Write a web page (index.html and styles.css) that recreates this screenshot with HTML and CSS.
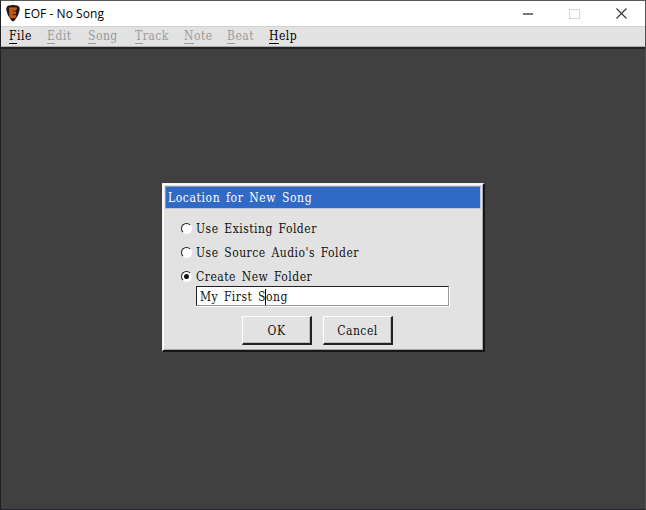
FILE: index.html
```html
<!DOCTYPE html>
<html lang="en">
<head>
<meta charset="utf-8">
<title>EOF - No Song</title>
<link rel="stylesheet" href="styles.css">
</head>
<body>
<div class="window">
  <header class="titlebar">
    <svg class="logo" width="14" height="17" viewBox="0 0 14 17">
      <path d="M2 .8Q7-.6 12 .8Q14 1.6 13.7 5Q13 10 9 15Q7 17.5 5 15Q1 10 .3 5Q0 1.6 2 .8Z" fill="#201714"/>
      <path d="M3.5 2.8H10.5L10 5.2H6.3V6.8H9.5V8.8H6.1V10.4H9.8L9.2 12.7H4.4L3.8 11Z" fill="#c9530f" stroke="#ee7627" stroke-width=".5"/>
    </svg>
    <h1 class="app-name">EOF - No Song</h1>
    <div class="controls">
      <svg width="10" height="10"><path d="M0 5H10" stroke="#777" stroke-width="2"/></svg>
      <svg width="11" height="10"><rect x=".5" y=".5" width="10" height="9" fill="none" stroke="#d4d4d4"/></svg>
      <svg width="11" height="11"><path d="M.5 .5L10.5 10.5M10.5 .5L.5 10.5" stroke="#333" stroke-width="1.1"/></svg>
    </div>
  </header>
  <nav class="menubar">
    <span class="menu active file"><u>F</u>ile</span>
    <span class="menu edit"><u>E</u>dit</span>
    <span class="menu song"><u>S</u>ong</span>
    <span class="menu track"><u>T</u>rack</span>
    <span class="menu note"><u>N</u>ote</span>
    <span class="menu beat"><u>B</u>eat</span>
    <span class="menu active help"><u>H</u>elp</span>
  </nav>
  <main class="workspace">
    <section class="dialog">
      <h2 class="dialog-title">Location for New Song</h2>
      <div class="options">
        <div class="option"><i class="radio"></i><span>Use Existing Folder</span></div>
        <div class="option"><i class="radio"></i><span>Use Source Audio's Folder</span></div>
        <div class="option"><i class="radio checked"></i><span>Create New Folder</span></div>
      </div>
      <div class="field">My First S<i class="caret"></i>ong</div>
      <div class="buttons">
        <div class="button ok">OK</div>
        <div class="button">Cancel</div>
      </div>
    </section>
  </main>
</div>
</body>
</html>
```
FILE: styles.css
```css
* { box-sizing: border-box; }
body { margin: 0; }
h1, h2 { margin: 0; font-weight: 400; }

.window {
  width: 646px;
  height: 510px;
  display: flex;
  flex-direction: column;
  background: #404040;
  border: 1px solid #202027;
  border-top-color: #5a5a5a;
  border-right-color: #505050;
  font: 12px/16px "DejaVu Serif Condensed", "DejaVu Serif", serif;
  font-stretch: condensed;
  letter-spacing: 0.5px;
  word-spacing: 1.8px;
  color: #111;
  overflow: hidden;
}

.titlebar {
  height: 25px;
  flex: none;
  display: flex;
  align-items: center;
  padding: 0 18px 0 5px;
  background: #fff;
}
.app-name {
  margin: 1px 0 0 4px;
  font: 12px/16px "Open Sans", sans-serif;
  letter-spacing: 0.05px;
  word-spacing: 0;
  color: #000;
}
.controls { display: flex; align-items: center; gap: 36px; margin-left: auto; }

.menubar {
  height: 23px;
  flex: none;
  display: flex;
  padding: 1px 0 0 8px;
  background: #e2e2e2;
  border-top: 1px solid #d2d2d2;
  border-bottom: 2px solid #222;
  box-shadow: inset 0 -1px #b0b0b0;
  color: #9a9a9a;
}
.menu { flex: none; white-space: nowrap; }
.active { color: #000; }
.menu u { text-decoration: none; display: inline-block; height: 16px; border-bottom: 1px solid currentColor; }
.file { width: 38px; }
.edit { width: 41px; }
.song { width: 47px; }
.track { width: 49px; }
.note { width: 43px; }
.beat { width: 42px; }

.workspace { flex: 1; padding: 134px 0 0 161px; }
.dialog {
  width: 323px;
  height: 169px;
  padding: 2px;
  background: #e2e2e2;
  border: 1px solid #f4f4f4;
  border-right: 2px solid #161616;
  border-bottom: 2px solid #161616;
  box-shadow: inset 1px 1px #fff, inset -1px -1px #a8a8a8;
}
.dialog-title {
  height: 23px;
  padding: 3px 0 0 2px;
  border: 1px solid #8f9bb4;
  border-right-color: #c0cadb;
  border-bottom-color: #c0cadb;
  background: #3169c6;
  font: inherit;
  letter-spacing: 0.6px;
  color: #fff;
}
.options { padding: 8px 0 0 16px; }
.option { height: 24px; display: flex; align-items: center; gap: 4px; }
.radio {
  width: 11px;
  height: 11px;
  margin-top: -2px;
  display: grid;
  place-items: center;
  border: 1px solid #222;
  border-right-color: #fff;
  border-bottom-color: #fff;
  border-radius: 50%;
  background: #fff;
}
.checked::after { content: ""; width: 5px; height: 5px; border-radius: 50%; background: #111; }
.field {
  width: 253px;
  height: 20px;
  margin: -3px 0 0 31px;
  padding: 2px 0 0 3px;
  background: #fff;
  border: 1px solid #222;
  border-right-color: #999;
  border-bottom-color: #999;
  box-shadow: 1px 1px #fff;
  white-space: nowrap;
}
.caret { display: inline-block; width: 1px; height: 16px; margin: 0 0 0 -1px; vertical-align: -4px; background: #000; }
.buttons { display: flex; gap: 11px; margin: 10px 0 0 77px; }
.button {
  width: 70px;
  height: 29px;
  padding-top: 6px;
  text-align: center;
  border: 1px solid #fff;
  border-right: 2px solid #222;
  border-bottom: 2px solid #222;
  box-shadow: inset -1px -1px #bdbdbd;
}
```
